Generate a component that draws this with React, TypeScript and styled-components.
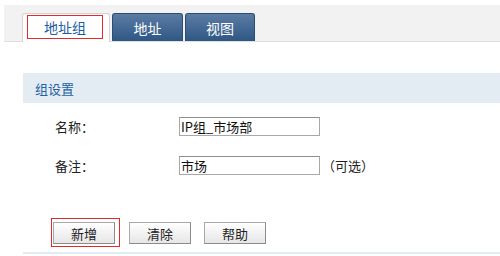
import React from "react";
import styled, { createGlobalStyle } from "styled-components";

const Global = createGlobalStyle`
  html, body { margin: 0; padding: 0; background: #ffffff; }
  body { font-family: "Noto Sans CJK SC", "Noto Sans", sans-serif; }
  * { box-sizing: border-box; }
`;

const Page = styled.div`
  width: 500px;
  height: 256px;
  overflow: hidden;
  background: #ffffff;
`;

const TabBar = styled.div`
  margin: 5px 0 0 4px;
  height: 37px;
  background: #f2f2f2;
  border-bottom: 1px solid #dedede;
  display: flex;
  align-items: flex-end;
  padding-left: 18px;
  gap: 1px;
`;

const ActiveTab = styled.div`
  width: 88px;
  height: 29px;
  margin-bottom: -1px;
  background: #ffffff;
  border: 1px solid #d4d4d4;
  border-bottom: none;
  border-radius: 3px 3px 0 0;
  padding: 1px 0 0 4px;
`;

const ActiveMark = styled.div`
  width: 76px;
  height: 24px;
  border: 1px solid #e32a2a;
  display: flex;
  align-items: center;
  justify-content: center;
  color: #1d5c9e;
  font-size: 14px;
`;

const Tab = styled.div<{ $w: number }>`
  width: ${(p) => p.$w}px;
  height: 28px;
  margin-left: 1px;
  background: linear-gradient(#5a7ca4, #2f5784);
  border: 1px solid #2b4c74;
  border-bottom: none;
  border-radius: 3px 3px 0 0;
  display: flex;
  align-items: center;
  justify-content: center;
  color: #ffffff;
  font-size: 14px;
`;

const SectionHeader = styled.div`
  margin: 31px 0 0 23px;
  height: 30px;
  background: #e4ecf3;
  padding-left: 12px;
  display: flex;
  align-items: center;
  color: #2562a2;
  font-size: 13px;
`;

const Form = styled.div`
  padding: 14px 0 0 55px;
  display: flex;
  flex-direction: column;
  gap: 20px;
`;

const Row = styled.div`
  display: flex;
  align-items: center;
  height: 19px;
`;

const Label = styled.div`
  width: 124px;
  font-size: 13px;
  color: #222222;
`;

const Field = styled.input`
  width: 141px;
  height: 19px;
  border: 1px solid #a8a8a8;
  border-top-color: #8e8e8e;
  padding: 0 1px;
  font-family: inherit;
  font-size: 13px;
  color: #111111;
  background: #ffffff;
  outline: none;
`;

const Hint = styled.span`
  margin-left: 2px;
  font-size: 13px;
  color: #222222;
`;

const ButtonRow = styled.div`
  margin: 43px 0 0 51px;
  display: flex;
  align-items: flex-start;
  gap: 13px;
`;

const Highlight = styled.div`
  border: 1px solid #e32a2a;
  padding: 3px 4px 2px 1px;
  margin-right: -4px;
`;

const Button = styled.button`
  width: 62px;
  height: 22px;
  margin-top: 4px;
  padding: 0;
  border: 1px solid #a9a9a9;
  border-right-color: #8c8c8c;
  border-bottom-color: #8c8c8c;
  background: linear-gradient(#ffffff, #e6e6e6);
  font-family: inherit;
  font-size: 13px;
  color: #222222;
  display: flex;
  align-items: center;
  justify-content: center;
  ${Highlight} & {
    margin-top: 0;
  }
`;

const BottomLine = styled.div`
  margin: 5px 0 0 23px;
  height: 2px;
  background: #e4ecf3;
`;

export default function App() {
  return (
    <Page>
      <Global />
      <TabBar>
        <ActiveTab>
          <ActiveMark>地址组</ActiveMark>
        </ActiveTab>
        <Tab $w={71}>地址</Tab>
        <Tab $w={70}>视图</Tab>
      </TabBar>
      <SectionHeader>组设置</SectionHeader>
      <Form>
        <Row>
          <Label>名称：</Label>
          <Field readOnly defaultValue="IP组_市场部" />
        </Row>
        <Row>
          <Label>备注：</Label>
          <Field readOnly defaultValue="市场" />
          <Hint>（可选）</Hint>
        </Row>
      </Form>
      <ButtonRow>
        <Highlight>
          <Button>新增</Button>
        </Highlight>
        <Button>清除</Button>
        <Button>帮助</Button>
      </ButtonRow>
      <BottomLine />
    </Page>
  );
}
